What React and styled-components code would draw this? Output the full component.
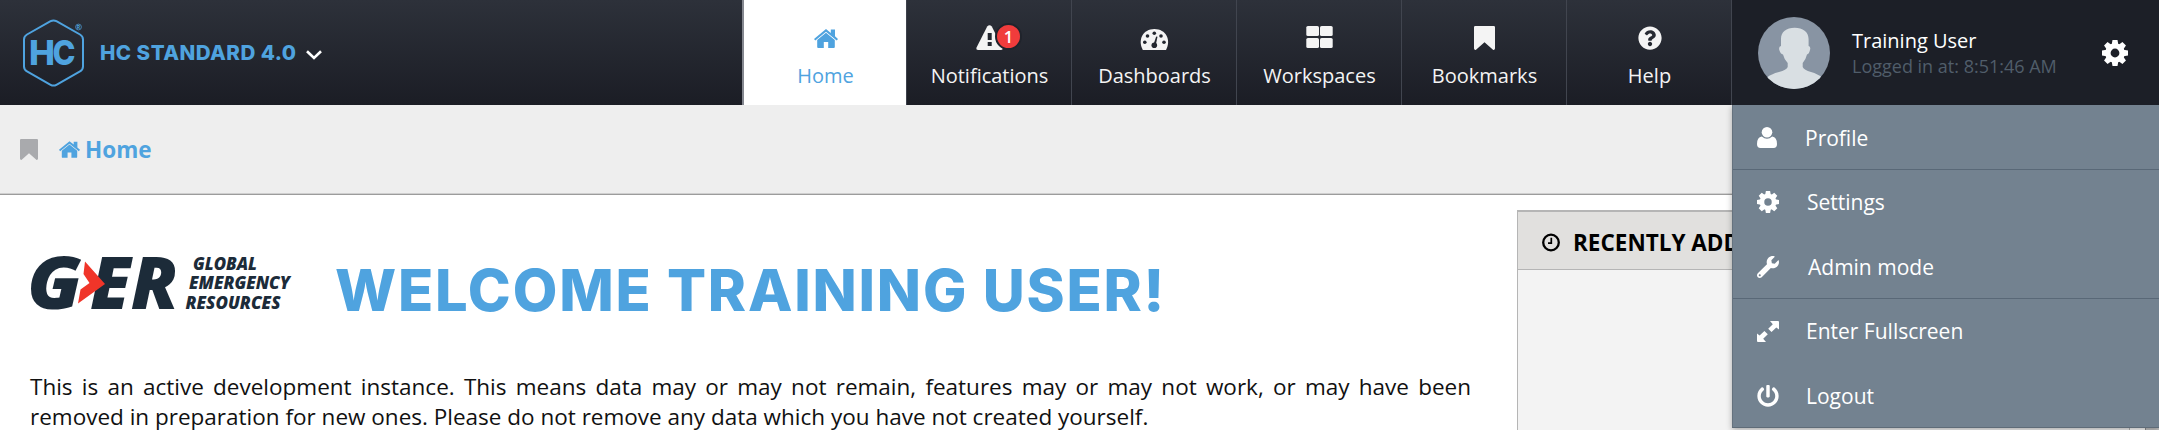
import React from 'react';
import styled, { createGlobalStyle, css } from 'styled-components';
import { FaQuestionCircle, FaWrench, FaPowerOff } from 'react-icons/fa';

const blue = '#4fa3df';
const sans = '"Open Sans", "Liberation Sans", sans-serif';
const display = 'Inter, "Liberation Sans", sans-serif';

const GlobalStyle = createGlobalStyle`
  *, *::before, *::after { box-sizing: border-box; }
  body { margin: 0; background: #fff; font-family: ${sans}; overflow: hidden; }
  svg { display: block; flex: none; overflow: visible; }
`;

const Page = styled.div`
  display: flex;
  flex-direction: column;
  height: 430px;
  overflow: hidden;
`;

const Header = styled.header`
  display: flex;
  height: 105px;
  flex: none;
  background: linear-gradient(#2d313a, #1b1d25);
`;

const Brand = styled.div`
  display: flex;
  align-items: center;
  flex: 1;
  padding-left: 22px;
`;

const BrandName = styled.span`
  margin: 0 10px 0 14px;
  font: 800 20.6px/28px ${display};
  letter-spacing: 0.45px;
  color: ${blue};
  white-space: nowrap;
`;

const Chevron = styled.span`
  padding-top: 5px;
`;

const Nav = styled.nav`
  display: flex;
  border-left: 2px solid #858890;
`;

const NavItem = styled.a`
  display: flex;
  flex-direction: column;
  align-items: center;
  width: 165px;
  padding-left: 1px;
  border-right: 1px solid #41454f;
  color: #f4f4f4;
  ${(p) => p.$active && css`
    width: 163px;
    border-right-color: #3d414b;
    background: #fff;
    color: ${blue};
  `}
`;

const NavIcon = styled.span`
  position: relative;
  display: flex;
  align-items: flex-end;
  justify-content: center;
  height: ${(p) => p.$bottom || 50}px;
  margin-bottom: ${(p) => 62 - (p.$bottom || 50)}px;
`;

const NavLabel = styled.span`
  font-size: 20px;
  line-height: 27px;
  white-space: nowrap;
`;

const Badge = styled.span`
  position: absolute;
  left: 19px;
  top: 23px;
  width: 27px;
  height: 27px;
  border: 2px solid #20242c;
  border-radius: 50%;
  background: #f03c3c;
  color: #fff;
  font-size: 16.5px;
  font-weight: 600;
  line-height: 24px;
  text-align: center;
`;

const UserBox = styled.div`
  display: flex;
  align-items: center;
  width: 427px;
  padding: 0 31px 0 26px;
  background: #1c1f27;
  color: #fff;
`;

const UserText = styled.div`
  flex: 1;
  padding-left: 22px;
`;

const UserName = styled.div`
  font-size: 20px;
  line-height: 27px;
`;

const LoginTime = styled.div`
  font-size: 18px;
  line-height: 25px;
  color: #505d6a;
`;

const Breadcrumb = styled.div`
  display: flex;
  align-items: center;
  flex: none;
  height: 90px;
  padding: 0 0 0 20px;
  background: #eee;
  border-bottom: 1px solid #9c9c9c;
  box-shadow: inset 0 -1px #cfcfcf;
`;

const CrumbBookmark = styled.span`
  color: #a9aaad;
`;

const Crumb = styled.a`
  display: flex;
  align-items: center;
  gap: 5px;
  margin-left: 21px;
  font-size: 22.5px;
  font-weight: 700;
  line-height: 30px;
  color: ${blue};
`;

const Content = styled.main`
  display: flex;
  flex: 1;
  min-height: 0;
`;

const Welcome = styled.section`
  width: 1441px;
  margin: 0 46px 0 30px;
  padding-top: 60px;
`;

const TitleRow = styled.div`
  display: flex;
  align-items: flex-start;
  height: 117px;
`;

const Title = styled.h1`
  margin: 0 0 0 41px;
  font: 800 57.8px/70px ${display};
  letter-spacing: 1.8px;
  color: ${blue};
  white-space: nowrap;
`;

const Intro = styled.p`
  margin: 0;
  font-size: 22.5px;
  line-height: 30px;
  text-align: justify;
  color: #111;
`;

const Panel = styled.aside`
  flex: 1;
  margin: 15px 15px 0 0;
  border: 1px solid #b5b5b5;
  border-top-width: 2px;
  border-bottom: 0;
  background: #f3f3f3;
`;

const PanelHeader = styled.h2`
  display: flex;
  align-items: center;
  gap: 13px;
  height: 58px;
  margin: 0;
  padding: 4px 0 0 24px;
  border-bottom: 1px solid #b5b5b5;
  background: #e1e0de;
  font-size: 22.5px;
  font-weight: 700;
  line-height: 30px;
  color: #000;
  white-space: nowrap;
`;

const ScrollTrack = styled.div`
  width: 14px;
  border-left: 1px solid #8f8f8f;
  background: #c4c4c4;
`;

const Menu = styled.div`
  position: absolute;
  left: 1732px;
  top: 105px;
  width: 427px;
  height: 323px;
  border-left: 1px solid #65727e;
  border-bottom: 1px solid #5f6c78;
  background: #738290;
  box-shadow: 0 2px 6px rgba(0, 0, 0, 0.3);
  clip-path: inset(0 0 -10px -10px);
`;

const MenuItem = styled.a`
  display: flex;
  align-items: center;
  height: ${(p) => p.$height || 64}px;
  padding: ${(p) => p.$offset || 0}px 0 0 24px;
  border-bottom: ${(p) => (p.$divided ? '1px solid #596877' : '0')};
  font-size: 21px;
  line-height: 30px;
  color: #fff;
`;

const MenuIcon = styled.span`
  display: flex;
  width: ${(p) => p.$width}px;
`;

function HomeIcon({ width, height }) {
  return (
    <svg width={width} height={height} viewBox="0 0 24 19" fill="currentColor">
      <path d="M12 0 L16.8 3.9 V0.6 H21 V7.3 L24 9.9 L22.7 11.4 L12 2.8 L1.3 11.4 L0 9.9 Z" />
      <path d="M12 3.8 L20.8 10.9 V18 Q20.8 19 19.8 19 H14.2 V13 H9.8 V19 H4.2 Q3.2 19 3.2 18 V10.9 Z" />
    </svg>
  );
}

function BookmarkIcon({ width, height }) {
  return (
    <svg width={width} height={height} viewBox="0 0 21 24" preserveAspectRatio="none" fill="currentColor">
      <path d="M1.2 0 H19.8 Q21 0 21 1.2 V22.6 Q20.6 24.4 19 23.7 L10.5 16.3 L2 23.7 Q0.4 24.4 0 22.6 V1.2 Q0 0 1.2 0 Z" />
    </svg>
  );
}

function AlertIcon() {
  return (
    <svg width="27" height="25" viewBox="0 0 27 25">
      <path d="M11.2 1.4 Q13.5 -1 15.8 1.4 L26.7 23 Q27 25 25 25 H2 Q0 25 0.3 23 Z" fill="currentColor" />
      <path d="M11.7 8 H15.7 V15 H11.7 Z M11.7 17 H15.7 V21 H11.7 Z" fill="#23272f" />
    </svg>
  );
}

function GaugeIcon() {
  const dots = [[4.8, 13.3], [7.5, 7], [14.3, 4.2], [21, 7], [24, 13.3]];
  return (
    <svg width="29" height="21" viewBox="0 0 29 21">
      <path d="M2.8 21 C-2.6 11 2.8 0 14.4 0 C26 0 31.4 11 26 21 Z" fill="currentColor" />
      <g fill="#23272f">
        {dots.map(([x, y]) => <circle key={x} cx={x} cy={y} r="1.8" />)}
        <circle cx="14.3" cy="16.3" r="2.8" />
        <path d="M13.6 15 L16.2 7.4 L17.5 7.8 L15.8 15.8 Z" />
      </g>
    </svg>
  );
}

function GridIcon() {
  return (
    <svg width="27" height="22" viewBox="0 0 27 22" fill="currentColor">
      <rect x="0.3" y="0" width="12.7" height="10" rx="1.6" />
      <rect x="14" y="0" width="12.7" height="10" rx="1.6" />
      <rect x="0.3" y="12" width="12.7" height="10" rx="1.6" />
      <rect x="14" y="12" width="12.7" height="10" rx="1.6" />
    </svg>
  );
}

function GearIcon({ size }) {
  return (
    <svg width={size} height={size} viewBox="-13 -13 26 26" fill="currentColor">
      {[0, 45, 90, 135].map((a) => (
        <g key={a} transform={`rotate(${a})`}>
          <path d="M-3.3 -8.5 L-2.5 -13 H2.5 L3.3 -8.5 V-7 H-3.3 Z M-3.3 8.5 L-2.5 13 H2.5 L3.3 8.5 V7 H-3.3 Z" />
        </g>
      ))}
      <circle r="7.1" fill="none" stroke="currentColor" strokeWidth="5.4" />
    </svg>
  );
}

function UserIcon() {
  return (
    <svg width="20" height="21" viewBox="0 0 20 21" fill="currentColor">
      <ellipse cx="10" cy="5.2" rx="5.3" ry="5.3" />
      <path d="M4.8 9.6 Q10 14 15.2 9.6 Q20 10.4 20 17 Q20 21 16.5 21 H3.5 Q0 21 0 17 Q0 10.4 4.8 9.6 Z" />
    </svg>
  );
}

function ExpandIcon() {
  return (
    <svg width="22" height="21" viewBox="0 0 22 21" fill="currentColor">
      <path d="M13 0 H21 Q22 0 22 1 V8.4 L19.3 6.6 L14.5 11 L11.2 7.8 L15.8 3.2 Z" />
      <path d="M9 21 H1 Q0 21 0 20 V12.6 L2.6 14.4 L7.4 10 L10.8 13.2 L6.2 17.8 Z" />
    </svg>
  );
}

function ClockIcon() {
  return (
    <svg width="18" height="19" viewBox="0 0 18 19" fill="none" stroke="currentColor">
      <circle cx="9" cy="9.5" r="7.8" strokeWidth="2.3" />
      <path d="M9.3 4.8 V10.1 H6" strokeWidth="1.7" />
    </svg>
  );
}

function Avatar() {
  return (
    <svg width="72" height="72" viewBox="0 0 72 72">
      <clipPath id="avatar"><circle cx="36" cy="36" r="36" /></clipPath>
      <g clipPath="url(#avatar)">
        <rect width="72" height="72" fill="#8894a3" />
        <path
          d="M36.7 10.7 C45 10.7 51 15 50.6 23 V29 Q53 29.5 52 33 Q51 37 49 37.5 Q48 42 44.7 46 V50 Q46 53 53 55 Q60 57 64 60.5 V72 H9 V60.5 Q13 57 21 55 Q28.5 53 29.7 50 V46 Q26 42 25 37.5 Q22.5 37 21.3 33 Q20.5 29.5 23 29 V23 C22.6 15 28 10.7 36.7 10.7 Z"
          fill="#d9dfe3"
        />
      </g>
    </svg>
  );
}

function HcLogo() {
  return (
    <svg width="64" height="68" viewBox="0 0 64 68">
      <path
        d="M28.6 2.2 Q31.5 0.6 34.4 2.2 L58 15.5 Q61 17.3 61 20.5 V47.5 Q61 50.7 58 52.4 L34.4 65.8 Q31.5 67.4 28.6 65.8 L5 52.4 Q2 50.7 2 47.5 V20.5 Q2 17.3 5 15.5 Z"
        fill="none" stroke={blue} strokeWidth="2"
      />
      <text x="7" y="45.5" fontFamily={display} fontWeight="800" fontSize="34" textLength="26" lengthAdjust="spacingAndGlyphs" fill={blue}>H</text>
      <text x="30.5" y="45.5" fontFamily={display} fontWeight="800" fontSize="34" textLength="23" lengthAdjust="spacingAndGlyphs" fill={blue}>C</text>
      <circle cx="56.5" cy="8" r="2.9" fill="none" stroke={blue} strokeWidth="0.7" />
      <text x="56.5" y="9.8" fontFamily={display} fontSize="5" fontWeight="700" textAnchor="middle" fill={blue}>R</text>
    </svg>
  );
}

function GerLogo() {
  const letter = { fontFamily: sans, fontWeight: 800, fontStyle: 'italic', fill: '#1c2b39' };
  const fit = { lengthAdjust: 'spacingAndGlyphs' };
  return (
    <svg width="264" height="60" viewBox="0 0 264 60">
      <g {...letter} fontSize="72">
        <text {...fit} x="-3" y="54" textLength="55">G</text>
        <text {...fit} x="60" y="54" textLength="88">ER</text>
      </g>
      <path d="M55 6.5 L75 29 L48 48.5 L50.5 34.5 L59.5 28 L53.5 19 Z" fill="#f03529" />
      <g {...letter} fontSize="17.8">
        <text {...fit} x="163" y="15" textLength="64">GLOBAL</text>
        <text {...fit} x="159" y="34.3" textLength="101">EMERGENCY</text>
        <text {...fit} x="155.5" y="53.8" textLength="95">RESOURCES</text>
      </g>
    </svg>
  );
}

export default function App() {
  return (
    <>
      <GlobalStyle />
      <Page>
        <Header>
          <Brand>
            <HcLogo />
            <BrandName>HC STANDARD 4.0</BrandName>
            <Chevron>
              <svg width="16" height="10" viewBox="0 0 16 10" fill="none" stroke="#fff" strokeWidth="2.6">
                <path d="M1 1.3 L8 8 L15 1.3" />
              </svg>
            </Chevron>
          </Brand>
          <Nav>
            <NavItem $active>
              <NavIcon $bottom={48}><HomeIcon width={24} height={19} /></NavIcon>
              <NavLabel>Home</NavLabel>
            </NavItem>
            <NavItem>
              <NavIcon><AlertIcon /><Badge>1</Badge></NavIcon>
              <NavLabel>Notifications</NavLabel>
            </NavItem>
            <NavItem>
              <NavIcon><GaugeIcon /></NavIcon>
              <NavLabel>Dashboards</NavLabel>
            </NavItem>
            <NavItem>
              <NavIcon $bottom={48}><GridIcon /></NavIcon>
              <NavLabel>Workspaces</NavLabel>
            </NavItem>
            <NavItem>
              <NavIcon><BookmarkIcon width={21} height={24} /></NavIcon>
              <NavLabel>Bookmarks</NavLabel>
            </NavItem>
            <NavItem>
              <NavIcon><FaQuestionCircle size={24} /></NavIcon>
              <NavLabel>Help</NavLabel>
            </NavItem>
          </Nav>
          <UserBox>
            <Avatar />
            <UserText>
              <UserName>Training User</UserName>
              <LoginTime>Logged in at: 8:51:46 AM</LoginTime>
            </UserText>
            <GearIcon size={26} />
          </UserBox>
        </Header>
        <Breadcrumb>
          <CrumbBookmark><BookmarkIcon width={18} height={21} /></CrumbBookmark>
          <Crumb><HomeIcon width={21} height={17} />Home</Crumb>
        </Breadcrumb>
        <Content>
          <Welcome>
            <TitleRow>
              <GerLogo />
              <Title>WELCOME TRAINING USER!</Title>
            </TitleRow>
            <Intro>
              This is an active development instance. This means data may or may not remain, features may or may not
              work, or may have been removed in preparation for new ones. Please do not remove any data which you have
              not created yourself.
            </Intro>
          </Welcome>
          <Panel>
            <PanelHeader><ClockIcon />RECENTLY ADDED</PanelHeader>
          </Panel>
          <ScrollTrack />
        </Content>
      </Page>
      <Menu>
        <MenuItem $divided $height={65} $offset={1}>
          <MenuIcon $width={48}><UserIcon /></MenuIcon>Profile
        </MenuItem>
        <MenuItem>
          <MenuIcon $width={50}><GearIcon size={22} /></MenuIcon>Settings
        </MenuItem>
        <MenuItem $divided $height={65} $offset={1}>
          <MenuIcon $width={51}><FaWrench size={22} /></MenuIcon>Admin mode
        </MenuItem>
        <MenuItem>
          <MenuIcon $width={49}><ExpandIcon /></MenuIcon>Enter Fullscreen
        </MenuItem>
        <MenuItem $height={65} $offset={1}>
          <MenuIcon $width={49}><FaPowerOff size={22} /></MenuIcon>Logout
        </MenuItem>
      </Menu>
    </>
  );
}
